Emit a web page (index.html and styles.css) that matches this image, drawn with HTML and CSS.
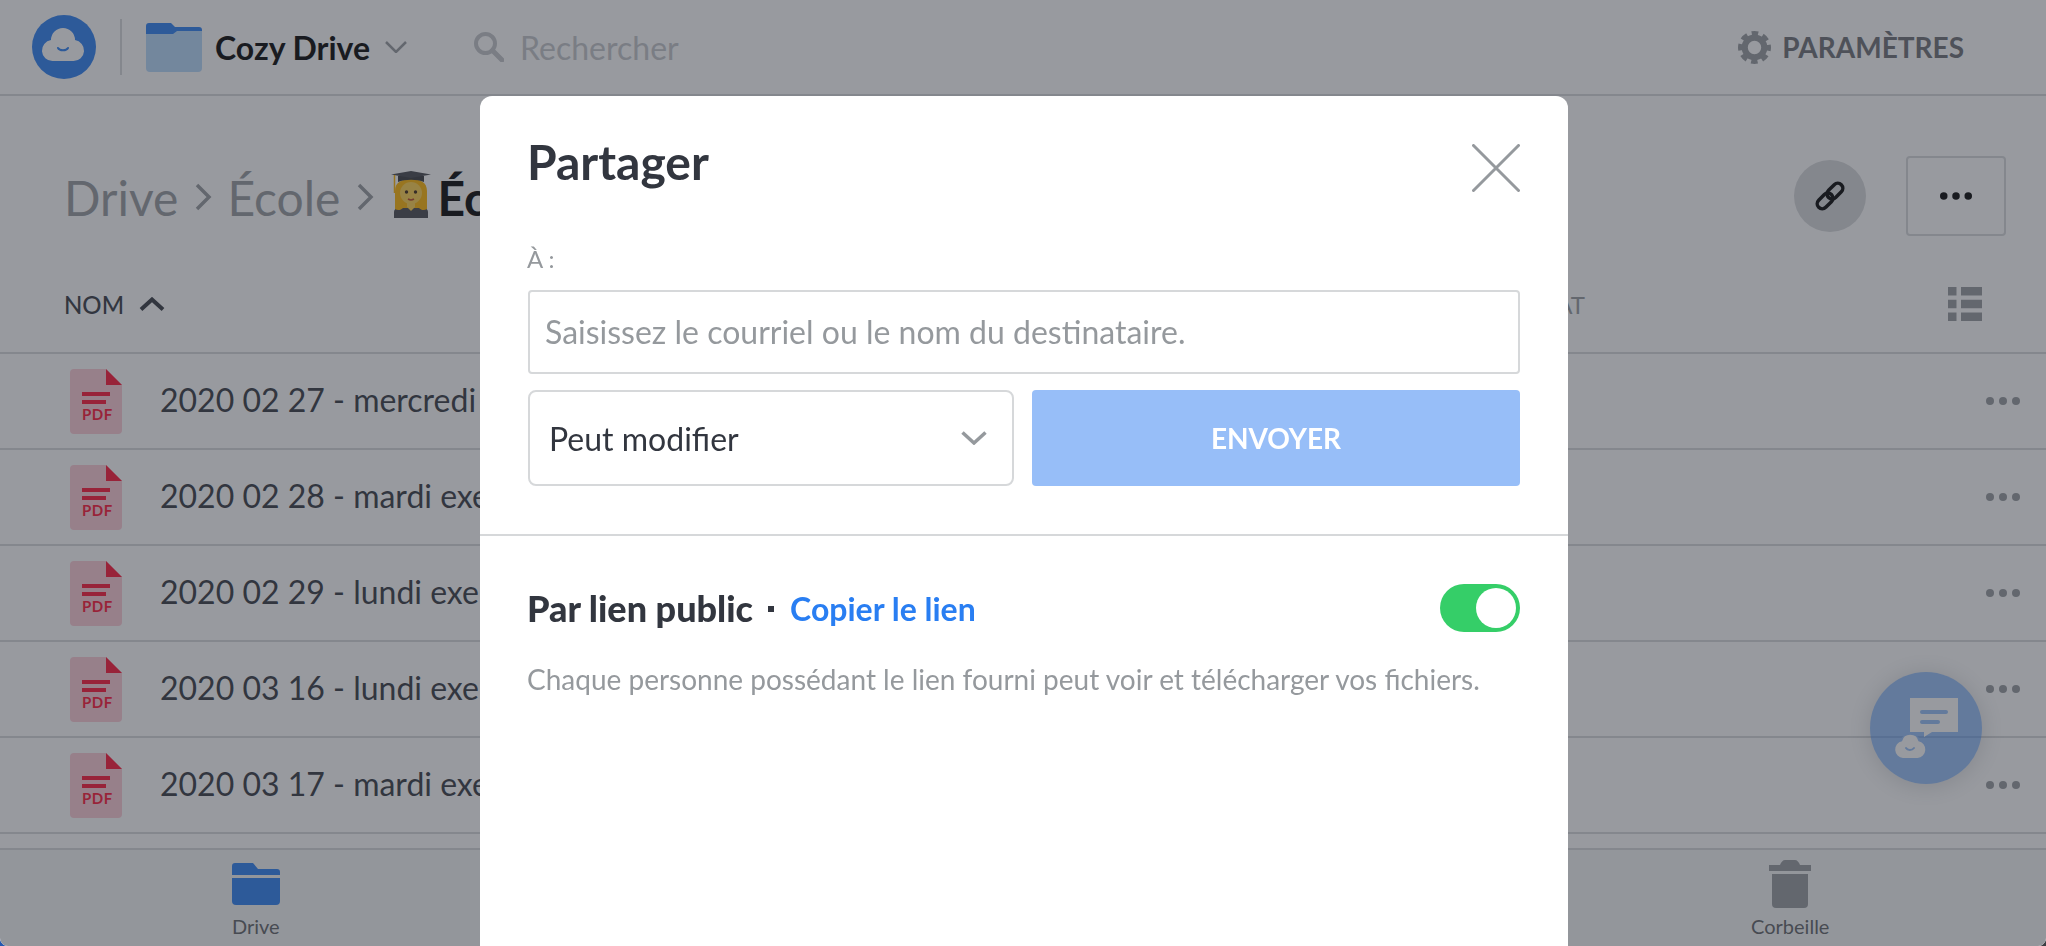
FILE: index.html
```html
<!DOCTYPE html>
<html lang="fr">
<head>
    <meta charset="utf-8">
    <title>Cozy Drive</title>
    <link rel="stylesheet" href="styles.css">
</head>
<body>
    <svg class="sprites" width="0" height="0">
        <symbol id="pdf" viewBox="0 0 52 65">
            <path d="M4 0h32l16 16v45a4 4 0 0 1-4 4H4a4 4 0 0 1-4-4V4a4 4 0 0 1 4-4z" fill="#fdcad5"/>
            <path d="M36 0l16 16H36z" fill="#ff1033"/>
            <path d="M12 23h28v4H12zM12 31h24v4H12z" fill="#ff1033"/>
        </symbol>
        <symbol id="dots" viewBox="0 0 34 8">
            <circle cx="4" cy="4" r="4"/>
            <circle cx="17" cy="4" r="4"/>
            <circle cx="30" cy="4" r="4"/>
        </symbol>
    </svg>

    <div class="page">
        <header class="topbar">
            <svg class="logo" width="64" height="64" viewBox="0 0 64 64">
                <circle cx="32" cy="32" r="32" fill="#297ef2"/>
                <path d="M20.5 46a10.5 10.5 0 0 1-1.5-20.9a12 12 0 0 1 24 0a10.5 10.5 0 0 1-1.5 20.9z" fill="#fff"/>
                <path d="M26 33c1.500 3 8.500 3 10 0" fill="none" stroke="#297ef2" stroke-width="2" stroke-linecap="round"/>
            </svg>
            <span class="topbar-sep"></span>
            <svg class="app-folder" width="56" height="49" viewBox="0 0 56 49">
                <path d="M0 8h56v37a4 4 0 0 1-4 4H4a4 4 0 0 1-4-4z" fill="#b4d8fb"/>
                <path d="M0 3a3 3 0 0 1 3-3h22l4 4h24a3 3 0 0 1 3 3v1H31l-4 3H0z" fill="#297ef2"/>
            </svg>
            <span class="app-name">Cozy Drive</span>
            <svg class="app-chevron" width="22" height="12" viewBox="0 0 22 12">
                <path d="M1 1l10 10L21 1" fill="none" stroke="#95999d" stroke-width="2.500"/>
            </svg>
            <div class="search">
                <svg width="30" height="30" viewBox="0 0 30 30">
                    <circle cx="11.500" cy="11.500" r="9.500" fill="none" stroke="#c2c5c9" stroke-width="4"/>
                    <path d="M18.500 18.500L28 28" stroke="#c2c5c9" stroke-width="5" stroke-linecap="round"/>
                </svg>
                <span>Rechercher</span>
            </div>
            <div class="settings">
                <svg width="33" height="33" viewBox="0 0 32 32">
                    <circle cx="16" cy="16" r="9.500" fill="none" stroke="#95999d" stroke-width="6"/>
                    <circle cx="16" cy="16" r="13.750" fill="none" stroke="#95999d" stroke-width="4.500" stroke-dasharray="6.300 4.500" stroke-dashoffset="3.150"/>
                </svg>
                <span>PARAMÈTRES</span>
            </div>
        </header>

        <main class="main">
            <div class="toolbar">
                <h1 class="crumbs">
                    <span>Drive</span>
                    <svg class="crumb-sep" width="18" height="28" viewBox="0 0 18 28"><path d="M3 2l12 12L3 26" fill="none" stroke="#95999d" stroke-width="3.500"/></svg>
                    <span>École</span>
                    <svg class="crumb-sep" width="18" height="28" viewBox="0 0 18 28"><path d="M3 2l12 12L3 26" fill="none" stroke="#95999d" stroke-width="3.500"/></svg>
                    <svg class="crumb-emoji" width="42" height="47" viewBox="0 0 42 47">
                        <path d="M4 47v-6c0-4 6-7 17-7s17 3 17 7v6z" fill="#45474d"/>
                        <path d="M5 38V20C5 11 12 8 21 8s16 3 16 12v18c-3 2-6 1-8-1H13c-2 2-5 3-8 1z" fill="#ffb400"/>
                        <path d="M17 30h8v6l-4 4-4-4z" fill="#ffd04a"/>
                        <ellipse cx="21" cy="22" rx="11" ry="11" fill="#ffd04a"/>
                        <circle cx="16.500" cy="21" r="1.700" fill="#3a2410"/>
                        <circle cx="25.500" cy="21" r="1.700" fill="#3a2410"/>
                        <path d="M18 28c2 1.200 4 1.200 6 0" fill="none" stroke="#b8431e" stroke-width="1.500"/>
                        <path d="M8 5h26v6c-7-3-19-3-26 0z" fill="#34363b"/>
                        <path d="M1 3.500L21 0l20 3.500L21 7z" fill="#42444a"/>
                        <path d="M4.500 4v18" stroke="#ffb400" stroke-width="1.500"/>
                    </svg>
                    <strong>Éc</strong>
                </h1>
                <div class="actions">
                    <button class="btn-link">
                        <svg width="32" height="32" viewBox="0 0 32 32">
                            <g transform="rotate(-45 16 16)" fill="none" stroke="#000" stroke-width="3.500">
                                <rect x="0" y="11" width="18" height="10" rx="5"/>
                                <rect x="14" y="11" width="18" height="10" rx="5"/>
                            </g>
                        </svg>
                    </button>
                    <button class="btn-more">
                        <svg width="32" height="8"><use href="#dots"/></svg>
                    </button>
                </div>
            </div>

            <div class="table-head">
                <span class="col-name">NOM
                    <svg width="26" height="14" viewBox="0 0 26 14"><path d="M2 12.500L13 2.500 24 12.500" fill="none" stroke="#32363f" stroke-width="4"/></svg>
                </span>
                <span class="col-state">AT</span>
                <span class="view-toggle">
                    <svg width="34" height="34" viewBox="0 0 34 34" fill="#95999d">
                        <path d="M0 0h8.500v8.500H0zM13 0h21v8.500H13zM0 12.700h8.500v8.500H0zM13 12.700h21v8.500H13zM0 25.500h8.500V34H0zM13 25.500h21V34H13z"/>
                    </svg>
                </span>
            </div>

            <div class="row">
                <svg class="file-icon" width="52" height="65"><use href="#pdf"/><text x="12" y="51" class="pdf-label">PDF</text></svg>
                <span class="file-name">2020 02 27 - mercredi</span>
                <svg class="row-menu" width="34" height="8"><use href="#dots"/></svg>
            </div>
            <div class="row">
                <svg class="file-icon" width="52" height="65"><use href="#pdf"/><text x="12" y="51" class="pdf-label">PDF</text></svg>
                <span class="file-name">2020 02 28 - mardi exe</span>
                <svg class="row-menu" width="34" height="8"><use href="#dots"/></svg>
            </div>
            <div class="row">
                <svg class="file-icon" width="52" height="65"><use href="#pdf"/><text x="12" y="51" class="pdf-label">PDF</text></svg>
                <span class="file-name">2020 02 29 - lundi exe</span>
                <svg class="row-menu" width="34" height="8"><use href="#dots"/></svg>
            </div>
            <div class="row">
                <svg class="file-icon" width="52" height="65"><use href="#pdf"/><text x="12" y="51" class="pdf-label">PDF</text></svg>
                <span class="file-name">2020 03 16 - lundi exe</span>
                <svg class="row-menu" width="34" height="8"><use href="#dots"/></svg>
            </div>
            <div class="row">
                <svg class="file-icon" width="52" height="65"><use href="#pdf"/><text x="12" y="51" class="pdf-label">PDF</text></svg>
                <span class="file-name">2020 03 17 - mardi exe</span>
                <svg class="row-menu" width="34" height="8"><use href="#dots"/></svg>
            </div>
        </main>

        <nav class="bottom-nav">
            <a class="nav-item">
                <svg width="48" height="48" viewBox="0 0 48 48" fill="#297ef2">
                    <path d="M0 15V6a3 3 0 0 1 3-3h18l5 6h19a3 3 0 0 1 3 3v3z"/>
                    <path d="M0 18h48v23a4 4 0 0 1-4 4H4a4 4 0 0 1-4-4z"/>
                </svg>
                <span>Drive</span>
            </a>
            <span class="nav-item"></span>
            <span class="nav-item"></span>
            <a class="nav-item">
                <svg width="48" height="48" viewBox="0 0 48 48" fill="#95999d">
                    <path d="M3 5h11c1-3 3-5 5-5h10c2 0 4 2 5 5h11v6H3z"/>
                    <path d="M6 14h36v30a4 4 0 0 1-4 4H10a4 4 0 0 1-4-4z"/>
                </svg>
                <span>Corbeille</span>
            </a>
        </nav>

        <button class="fab">
            <svg width="64" height="60" viewBox="0 0 64 60">
                <path d="M16 0h48v34H38l-8 5v-5H16z" fill="#fff"/>
                <path d="M28 14h24M28 24h16" stroke="#94bef8" stroke-width="4" stroke-linecap="round"/>
                <path d="M9 60a8.500 8.500 0 0 1-1-16.800a8.500 8.500 0 0 1 16.500 0a8.500 8.500 0 0 1-1 16.800z" fill="#fff" stroke="#94bef8" stroke-width="3" paint-order="stroke"/>
                <path d="M12 50c1.500 2.500 6 2.500 8 0" fill="none" stroke="#94bef8" stroke-width="2" stroke-linecap="round"/>
            </svg>
        </button>
    </div>

    <div class="overlay">
        <section class="modal">
            <div class="modal-head">
                <h2>Partager</h2>
                <svg class="modal-close" width="48" height="48" viewBox="0 0 48 48">
                    <path d="M1.500 1.500l45 45M46.500 1.500l-45 45" stroke="#95999d" stroke-width="3" stroke-linecap="round"/>
                </svg>
            </div>

            <div class="share-form">
                <label class="share-label" for="recipient">À :</label>
                <input class="share-input" id="recipient" type="text" placeholder="Saisissez le courriel ou le nom du destinataire.">
                <div class="share-row">
                    <div class="share-select">
                        <span>Peut modifier</span>
                        <svg width="26" height="14" viewBox="0 0 26 14"><path d="M1.500 1.500L13 12 24.500 1.500" fill="none" stroke="#95999d" stroke-width="3.500"/></svg>
                    </div>
                    <button class="share-send">ENVOYER</button>
                </div>
            </div>

            <div class="public-link">
                <div class="public-head">
                    <strong class="public-title">Par lien public</strong>
                    <span class="public-dot"></span>
                    <a class="public-copy">Copier le lien</a>
                    <span class="toggle"><span class="toggle-knob"></span></span>
                </div>
                <p class="public-text">Chaque personne possédant le lien fourni peut voir et télécharger vos fichiers.</p>
            </div>
        </section>
    </div>
</body>
</html>
```

FILE: styles.css
```css
* {
    box-sizing: border-box;
}

html {
    background: linear-gradient(to right, #2458b0 50%, #3c3e43 50%);
}

body {
    margin: 0;
    height: 100vh;
    overflow: hidden;
    font-family: Lato, "Open Sans", sans-serif;
    color: #32363f;
}

button {
    font-family: inherit;
    border: none;
    background: none;
    padding: 0;
}

.sprites {
    position: absolute;
}

.pdf-label {
    font-family: Lato, sans-serif;
    font-weight: 700;
    font-size: 15px;
    letter-spacing: 0.5px;
    fill: #ff1033;
}

.page {
    display: flex;
    flex-direction: column;
    height: 100vh;
    background: #fff;
    border-radius: 0 0 8px 8px;
    overflow: hidden;
}

/* top bar */
.topbar {
    flex: none;
    display: flex;
    align-items: center;
    height: 96px;
    padding: 0 82px 0 32px;
    border-bottom: 2px solid #d6d8da;
}

.topbar-sep {
    width: 2px;
    height: 56px;
    margin: 0 24px;
    background: #d6d8da;
}

.app-name {
    margin-left: 13px;
    font-size: 32px;
    font-weight: 700;
    color: #000;
}

.app-chevron {
    margin-left: 15px;
}

.search {
    display: flex;
    align-items: center;
    gap: 16px;
    margin-left: 67px;
    font-size: 32px;
    color: #c2c5c9;
}

.settings {
    display: flex;
    align-items: center;
    gap: 11px;
    margin-left: auto;
    font-size: 28px;
    font-weight: 700;
    color: #6a6d73;
}

/* main list */
.main {
    flex: 1;
    overflow: hidden;
}

.toolbar {
    display: flex;
    align-items: center;
    justify-content: space-between;
    height: 160px;
    padding: 40px 40px 0 64px;
}

.crumbs {
    display: flex;
    align-items: center;
    margin: 2px 0 0;
    font-size: 48px;
    font-weight: 400;
    color: #95999d;
    white-space: nowrap;
}

.crumb-sep {
    flex: none;
    margin: 0 15px 0 16px;
}

.crumb-emoji {
    flex: none;
    margin: -6px 5px 0 1px;
}

.crumbs strong {
    color: #000;
}

.actions {
    display: flex;
    align-items: center;
    gap: 40px;
}

.btn-link {
    display: flex;
    align-items: center;
    justify-content: center;
    width: 72px;
    height: 72px;
    border-radius: 50%;
    background: #d6d8da;
}

.btn-more {
    display: flex;
    align-items: center;
    justify-content: center;
    width: 100px;
    height: 80px;
    border: 2px solid #d6d8da;
    border-radius: 4px;
}

.table-head {
    display: flex;
    align-items: center;
    height: 98px;
    padding: 0 64px;
    border-bottom: 2px solid #d6d8da;
    font-size: 24px;
}

.col-name {
    display: flex;
    align-items: center;
    gap: 15px;
    width: 1000px;
    font-weight: 500;
}

.col-state {
    width: 521px;
    text-align: right;
    color: #95999d;
}

.view-toggle {
    display: flex;
    margin-left: auto;
}

.row {
    display: flex;
    align-items: center;
    height: 96px;
    padding: 0 26px 0 70px;
    border-bottom: 2px solid #d6d8da;
}

.file-icon {
    flex: none;
}

.file-name {
    margin: 0 0 3px 38px;
    font-size: 32px;
    white-space: nowrap;
}

.row-menu {
    margin-left: auto;
    fill: #95999d;
}

/* bottom navigation */
.bottom-nav {
    flex: none;
    display: flex;
    height: 98px;
    border-top: 2px solid #d6d8da;
    background: #f5f6f7;
}

.nav-item {
    flex: 1;
    display: flex;
    flex-direction: column;
    align-items: center;
    padding-top: 10px;
    font-size: 20px;
    line-height: 24px;
    color: #5d6165;
}

.nav-item span {
    margin-top: 6px;
}

.fab {
    position: absolute;
    right: 64px;
    top: 672px;
    display: flex;
    align-items: center;
    justify-content: center;
    width: 112px;
    height: 112px;
    border-radius: 50%;
    background: rgba(41, 126, 242, 0.5);
    box-shadow: 0 2px 24px rgba(50, 54, 63, 0.2);
}

/* share dialog */
.overlay {
    position: fixed;
    top: 0;
    left: 0;
    right: 0;
    bottom: 0;
    padding: 96px 0 0 480px;
    border-radius: 0 0 8px 8px;
    background: rgba(50, 54, 63, 0.5);
}

.modal {
    width: 1088px;
    height: 100%;
    background: #fff;
    border-radius: 12px 12px 0 0;
}

.modal-head {
    display: flex;
    align-items: flex-start;
    justify-content: space-between;
    padding: 48px 48px 0 47px;
}

.modal-head h2 {
    margin: 0;
    font-size: 48px;
    line-height: 36px;
    font-weight: 700;
}

.share-form {
    padding: 51px 48px 48px;
    border-bottom: 2px solid #d6d8da;
}

.share-label {
    display: block;
    margin: 0 0 15px -1px;
    font-size: 24px;
    line-height: 32px;
    color: #95999d;
}

.share-input {
    display: block;
    width: 100%;
    height: 84px;
    padding: 0 15px 2px;
    border: 2px solid #d6d8da;
    border-radius: 4px;
    font-family: inherit;
    font-size: 32px;
    color: #32363f;
}

.share-input::placeholder {
    color: #95999d;
    opacity: 1;
}

.share-row {
    display: flex;
    gap: 18px;
    margin-top: 16px;
}

.share-select {
    flex: none;
    display: flex;
    align-items: center;
    justify-content: space-between;
    width: 486px;
    height: 96px;
    padding: 0 25px 0 19px;
    border: 2px solid #d6d8da;
    border-radius: 8px;
    font-size: 32px;
}

.share-send {
    flex: 1;
    height: 96px;
    border-radius: 4px;
    background: #97bef8;
    color: #fff;
    font-size: 28px;
    font-weight: 700;
}

.public-link {
    padding: 48px 48px 0 47px;
}

.public-head {
    display: flex;
    align-items: center;
    font-size: 32px;
    font-weight: 700;
}

.public-title {
    font-size: 36px;
}

.public-dot {
    width: 6px;
    height: 6px;
    margin: 2px 16px 0 15px;
    background: #32363f;
}

.public-copy {
    color: #297ef2;
}

.toggle {
    display: flex;
    justify-content: flex-end;
    align-items: center;
    width: 80px;
    height: 48px;
    margin-left: auto;
    padding-right: 4px;
    border-radius: 24px;
    background: #35ce68;
}

.toggle-knob {
    width: 40px;
    height: 40px;
    border-radius: 50%;
    background: #fff;
}

.public-text {
    margin: 27px 0 0;
    font-size: 28px;
    line-height: 40px;
    color: #95999d;
}
```
